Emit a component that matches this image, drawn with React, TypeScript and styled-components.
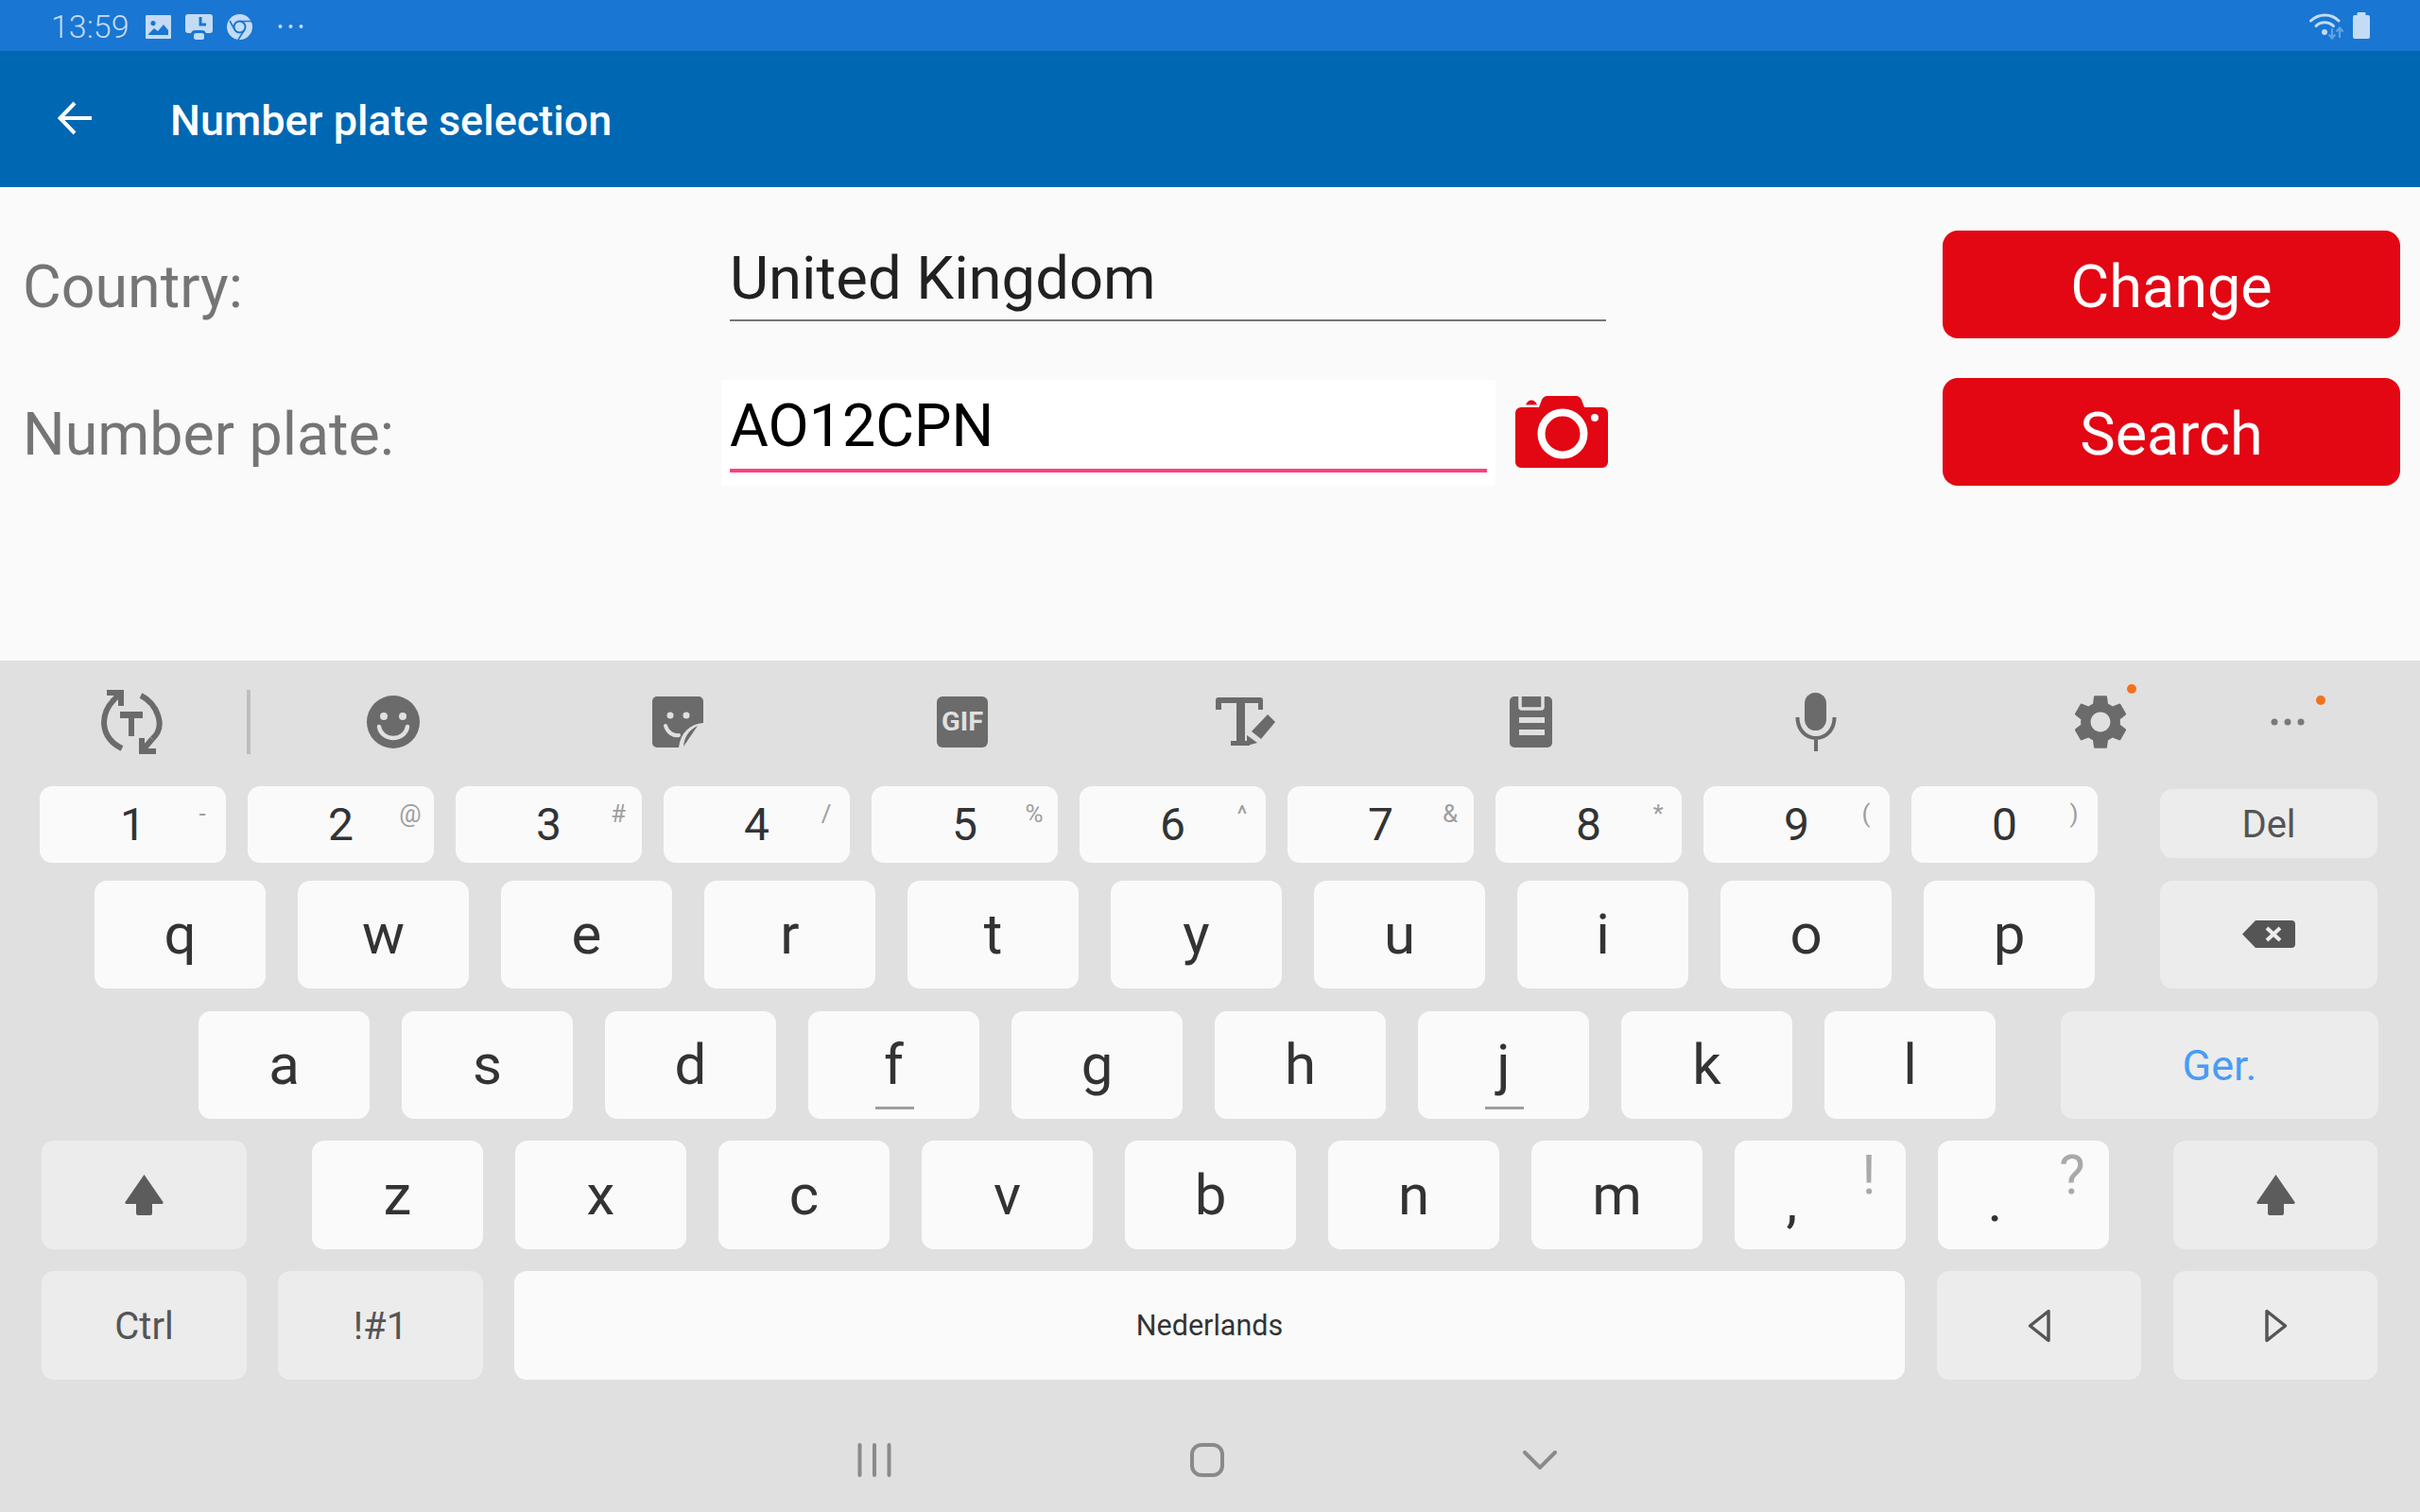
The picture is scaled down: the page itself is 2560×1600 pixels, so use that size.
import React from "react";
import styled, { createGlobalStyle } from "styled-components";

const Global = createGlobalStyle`
  html, body { margin: 0; padding: 0; background: #e0e0e0; }
  body { font-family: Roboto, "Liberation Sans", sans-serif; }
`;

const Screen = styled.div`
  width: 2560px;
  height: 1600px;
  display: flex;
  flex-direction: column;
  overflow: hidden;
`;

const StatusBar = styled.div`
  height: 54px;
  background: #1976d2;
  display: flex;
  align-items: center;
  padding: 2px 53px 0 54px;
  box-sizing: border-box;
  color: #c3dbf5;
`;
const Clock = styled.span`
  font-size: 34px;
  font-weight: 300;
  margin-right: 18px;
  width: 82px;
`;
const StatusIcons = styled.div`
  display: flex;
  align-items: center;
  gap: 15px;
`;
const StatusRight = styled.div`
  margin-left: auto;
  margin-top: -2px;
  display: flex;
  align-items: center;
  gap: 9px;
`;

const AppBar = styled.div`
  height: 144px;
  background: #0067b3;
  display: flex;
  align-items: center;
  padding-left: 61px;
  color: #fff;
`;
const BackIcon = styled.svg`
  width: 36px;
  height: 36px;
  margin-right: 83px;
  margin-top: -2px;
`;
const Title = styled.h1`
  margin: 2px 0 0;
  font-size: 45px;
  font-weight: 500;
  line-height: 1;
`;

const Content = styled.div`
  height: 501px;
  background: #fafafa;
  box-sizing: border-box;
  padding: 46px 21px 0 24px;
  display: grid;
  grid-template-columns: 739px 1292px 484px;
  grid-template-rows: 114px 114px;
  row-gap: 42px;
  align-items: center;
`;
const Label = styled.div`
  font-size: 62.7px;
  color: #757575;
  line-height: 1;
  margin-top: 6px;
`;
const FieldCell = styled.div`
  display: flex;
  align-items: center;
  height: 100%;
`;
const CountryField = styled.div`
  width: 927px;
  margin-left: 9px;
  height: 97px;
  box-sizing: border-box;
  border-bottom: 2px solid #757575;
  font-size: 63.4px;
  line-height: 103px;
  color: #212121;
  margin-top: -19px;
`;
const PlateBox = styled.div`
  width: 819px;
  height: 112px;
  margin-top: 2px;
  box-sizing: border-box;
  background: #fff;
  padding: 0 9px;
`;
const PlateText = styled.div`
  height: 98px;
  box-sizing: border-box;
  border-bottom: 4px solid #ff4081;
  font-size: 62.7px;
  line-height: 98px;
  color: #000;
`;
const CameraIcon = styled.svg`
  width: 98px;
  height: 76px;
  margin-left: 21px;
`;
const ActionButton = styled.div`
  height: 114px;
  border-radius: 16px;
  background: #e30613;
  color: #fff;
  font-size: 63px;
  display: flex;
  align-items: center;
  justify-content: center;
  padding-top: 5px;
  box-sizing: border-box;
`;

const Keyboard = styled.div`
  flex: 1;
  background: #e0e0e0;
  display: flex;
  flex-direction: column;
`;
const Toolbar = styled.div`
  height: 133px;
  box-sizing: border-box;
  padding-bottom: 3px;
  display: flex;
  align-items: center;
  flex: none;
`;
const ToolSlot = styled.div<{ $w: number; $ml?: number }>`
  position: relative;
  flex: none;
  width: ${(p) => p.$w}px;
  margin-left: ${(p) => p.$ml ?? 0}px;
  display: flex;
  justify-content: center;
  align-items: center;
  color: #6b6b6b;
`;
const Separator = styled.div`
  flex: none;
  width: 4px;
  height: 68px;
  margin-left: 22px;
  background: #bdbdbd;
`;
const Notice = styled.span<{ $x: number; $y: number }>`
  position: absolute;
  left: 50%;
  top: 50%;
  width: 10px;
  height: 10px;
  margin-left: ${(p) => p.$x - 5}px;
  margin-top: ${(p) => p.$y - 5}px;
  border-radius: 50%;
  background: #f4711c;
`;

const KeyRow = styled.div<{ $h: number; $pl: number; $gap: number; $mt: number }>`
  flex: none;
  height: ${(p) => p.$h}px;
  margin-top: ${(p) => p.$mt}px;
  padding-left: ${(p) => p.$pl}px;
  display: flex;
  gap: ${(p) => p.$gap}px;
`;
const Key = styled.div<{ $w: number; $fn?: boolean; $ml?: number; $short?: boolean }>`
  position: relative;
  flex: none;
  box-sizing: border-box;
  width: ${(p) => p.$w}px;
  height: ${(p) => (p.$short ? "73px" : "100%")};
  margin-left: ${(p) => p.$ml ?? 0}px;
  margin-top: ${(p) => (p.$short ? "3px" : "0")};
  border-radius: 13px;
  background: ${(p) => (p.$fn ? "#ececec" : "#fafafa")};
  display: flex;
  align-items: center;
  justify-content: center;
  color: #333;
`;
const Digit = styled.span`
  font-size: 48px;
  line-height: 1;
`;
const Letter = styled.span<{ $dx?: number; $dy?: number }>`
  font-size: 60px;
  line-height: 1;
  margin-left: ${(p) => p.$dx ?? 0}px;
  margin-top: ${(p) => p.$dy ?? 0}px;
`;
const SmallHint = styled.span`
  position: absolute;
  left: 172px;
  top: 16px;
  transform: translateX(-50%);
  font-size: 26px;
  line-height: 1;
  color: #9e9e9e;
`;
const BigHint = styled.span`
  position: absolute;
  left: 142px;
  top: 7px;
  transform: translateX(-50%);
  font-size: 58px;
  line-height: 1;
  color: #a9a9a9;
`;
const Underline = styled.span`
  position: absolute;
  left: 50%;
  bottom: 10px;
  width: 41px;
  height: 3px;
  margin-left: -20px;
  background: #9e9e9e;
`;
const FnLabel = styled.span`
  font-size: 40px;
  line-height: 1;
  color: #555;
  margin-top: 2px;
`;
const LangLabel = styled.span`
  font-size: 45px;
  line-height: 1;
  color: #4a9bf5;
`;
const SpaceLabel = styled.span`
  font-size: 30.5px;
  line-height: 1;
  color: #333;
  margin-top: 2px;
`;

const NavBar = styled.div`
  flex: 1;
  display: flex;
  align-items: center;
  justify-content: center;
  padding: 30px 6px 0 0;
  color: #8a8a8a;
`;
const NavSlot = styled.div`
  width: 352px;
  display: flex;
  justify-content: center;
`;

const BG = "#e0e0e0";

const ImageIcon = () => (
  <svg width="27" height="25" viewBox="0 0 27 25">
    <path fill="currentColor" fillRule="evenodd" d="M1 0h25a1 1 0 0 1 1 1v23a1 1 0 0 1-1 1H1a1 1 0 0 1-1-1V1a1 1 0 0 1 1-1zM3 21h21v-5l-5-6-6 7-4-3-6 6zM8 6a2.6 2.6 0 1 0 0.01 0z" />
  </svg>
);
const DownloadIcon = () => (
  <svg width="29" height="27" viewBox="0 0 29 27">
    <path fill="currentColor" d="M3 0h23a3 3 0 0 1 3 3v14a3 3 0 0 1-3 3h-4c-1 -2-2-3-4-3h-8c-2 0-3 1-4 3H3a3 3 0 0 1-3-3V3a3 3 0 0 1 3-3z" />
    <path fill="none" stroke="#1976d2" strokeWidth="3" d="M16 3v8h6" />
    <rect x="9" y="20" width="11" height="7" rx="2.5" fill="currentColor" />
  </svg>
);
const ChromeIcon = () => (
  <svg width="27" height="27" viewBox="0 0 27 27">
    <circle cx="13.5" cy="13.5" r="13.5" fill="currentColor" />
    <circle cx="13.5" cy="13.5" r="6" fill="none" stroke="#1976d2" strokeWidth="2" />
    <path fill="none" stroke="#1976d2" strokeWidth="1.6" d="M13.5 7.5H26M8.3 16.5L3 7M18.7 16.5L12 27" />
  </svg>
);
const DotsIcon = () => (
  <svg width="27" height="6" viewBox="0 0 27 6" style={{ marginLeft: 12 }}>
    <circle cx="2.5" cy="3" r="2" fill="currentColor" />
    <circle cx="13.5" cy="3" r="2" fill="currentColor" />
    <circle cx="24.5" cy="3" r="2" fill="currentColor" />
  </svg>
);
const WifiIcon = () => (
  <svg width="37" height="28" viewBox="0 0 37 28" style={{ marginTop: 2 }}>
    <g fill="none" stroke="currentColor" strokeWidth="3" strokeLinecap="round">
      <path d="M1.5 8C10 0 23 0 31 8" />
      <path d="M7 13.5C12 8.5 20 8.5 25.5 13.5" />
    </g>
    <circle cx="16" cy="20" r="3" fill="currentColor" />
    <g fill="none" stroke="#5fa2e6" strokeWidth="2.2">
      <path d="M24 16v10M20.5 22.5l3.5 4 3.5-4" />
      <path d="M32 26v-10M28.5 19.5l3.5-4 3.5 4" />
    </g>
  </svg>
);
const BatteryIcon = () => (
  <svg width="18" height="28" viewBox="0 0 18 28">
    <path fill="currentColor" d="M5.5 0h7a1 1 0 0 1 1 1v2H16a2 2 0 0 1 2 2v21a2 2 0 0 1-2 2H2a2 2 0 0 1-2-2V5a2 2 0 0 1 2-2h2.500V1a1 1 0 0 1 1-1z" />
  </svg>
);
const Camera = () => (
  <CameraIcon viewBox="0 0 98 76">
    <path fill="#e30613" d="M34 0h30c3 0 5 2 6 4l3 8h19a6 6 0 0 1 6 6v52a6 6 0 0 1-6 6H6a6 6 0 0 1-6-6V18a6 6 0 0 1 6-6h19l3-8c1-2 3-4 6-4z" />
    <path fill="#e30613" d="M11 9.500c1-3 3-5 6-5s5 2 6 5z" />
    <path fill="none" stroke="#fafafa" strokeWidth="1.500" d="M9 10.500H25" />
    <circle cx="50" cy="40" r="22.500" fill="none" stroke="#fff" strokeWidth="8" />
    <circle cx="84" cy="23" r="4" fill="#fff" />
  </CameraIcon>
);

const RotateIcon = () => (
  <svg width="68" height="68" viewBox="0 0 68 68">
    <g fill="none" stroke="#6b6b6b" strokeWidth="6">
      <path d="M15 11C1 26 0 50 24 62" />
      <path d="M44 6C60 14 72 38 56 52" />
      <path d="M8 3H23V17M23 3L14 12" />
      <path d="M45 51V65H60M45 65L56 52" />
    </g>
    <path fill="#6b6b6b" d="M22 23H46V30H37V49H31V30H22z" />
  </svg>
);
const SmileIcon = () => (
  <svg width="56" height="56" viewBox="0 0 56 56">
    <circle cx="28" cy="28" r="28" fill="#6b6b6b" />
    <circle cx="18" cy="22" r="4" fill={BG} />
    <circle cx="38" cy="22" r="4" fill={BG} />
    <path d="M13 33C16 49 40 49 43 33" fill="none" stroke={BG} strokeWidth="4.5" strokeLinecap="round" />
  </svg>
);
const StickerIcon = () => (
  <svg width="54" height="54" viewBox="0 0 54 54">
    <path fill="#6b6b6b" d="M5 0H49a5 5 0 0 1 5 5V28C40 29 30 38 28 54H5a5 5 0 0 1-5-5V5a5 5 0 0 1 5-5z" />
    <path fill="#6b6b6b" d="M33 53C34 43 38 36 48 31z" />
    <circle cx="19" cy="20" r="3.500" fill={BG} />
    <circle cx="36" cy="20" r="3.500" fill={BG} />
    <path d="M14 31C16 38 22 42 28 41" fill="none" stroke={BG} strokeWidth="4" strokeLinecap="round" />
  </svg>
);
const GifIcon = () => (
  <svg width="54" height="54" viewBox="0 0 54 54">
    <rect width="54" height="54" rx="6" fill="#6b6b6b" />
    <text x="27" y="36" textAnchor="middle" fontFamily="Roboto, sans-serif" fontWeight="700" fontSize="27" textLength="44" lengthAdjust="spacingAndGlyphs" fill={BG}>GIF</text>
  </svg>
);
const TextEditIcon = () => (
  <svg width="65" height="52" viewBox="0 0 65 52">
    <path fill="#6b6b6b" d="M3 0H47a3 3 0 0 1 3 3V13H45V6H31V46H36V51H16V46H22V6H6V13H0V3a3 3 0 0 1 3-3z" />
    <path fill="#6b6b6b" d="M55 18L63 26L48 44L38 36zM33 40L44 48L33 51z" />
  </svg>
);
const ClipIcon = () => (
  <svg width="45" height="54" viewBox="0 0 45 54">
    <rect width="45" height="54" rx="5" fill="#6b6b6b" />
    <path d="M11 0V11a2 2 0 0 0 2 2H33a2 2 0 0 0 2-2V0" fill="none" stroke={BG} strokeWidth="3.500" />
    <rect x="10" y="22" width="27" height="6" fill={BG} />
    <rect x="10" y="35" width="27" height="6" fill={BG} />
  </svg>
);
const MicIcon = () => (
  <svg width="44" height="62" viewBox="0 0 44 62">
    <rect x="10" width="23" height="40" rx="11.500" fill="#6b6b6b" />
    <path d="M2.500 26C2.500 39 11 48 22 48S41.500 39 41.500 26M22 48V62" fill="none" stroke="#6b6b6b" strokeWidth="4" />
  </svg>
);
const GearIcon = () => (
  <svg width="56" height="58" viewBox="2.700 2 18.600 20">
    <path fill="#6b6b6b" d="M19.14 12.940c.04-.3.06-.61.06-.94 0-.32-.02-.64-.07-.94l2.030-1.580c.18-.14.23-.41.12-.61l-1.920-3.320c-.12-.22-.37-.29-.59-.22l-2.390.96c-.5-.38-1.030-.7-1.620-.94l-.36-2.540c-.04-.24-.24-.41-.48-.41h-3.840c-.24 0-.43.17-.47.41l-.36 2.540c-.59.24-1.130.57-1.620.94l-2.390-.96c-.22-.08-.47 0-.59.22L2.740 8.870c-.12.21-.08.47.12.61l2.030 1.580c-.05.3-.09.63-.09.94s.02.64.07.94l-2.030 1.580c-.18.14-.23.41-.12.61l1.920 3.320c.12.22.37.29.59.22l2.390-.96c.5.38 1.030.7 1.620.94l.36 2.540c.05.24.24.41.48.41h3.840c.24 0 .44-.17.47-.41l.36-2.540c.59-.24 1.130-.56 1.620-.94l2.390.96c.22.08.47 0 .59-.22l1.920-3.320c.12-.22.07-.47-.12-.61l-2.010-1.580zM12 15.600c-1.980 0-3.600-1.620-3.600-3.600s1.620-3.600 3.600-3.600 3.600 1.620 3.600 3.600-1.620 3.600-3.600 3.600z" />
  </svg>
);
const MoreIcon = () => (
  <svg width="36" height="8" viewBox="0 0 36 8">
    <circle cx="4" cy="4" r="3.500" fill="#7a7a7a" />
    <circle cx="18" cy="4" r="3.500" fill="#7a7a7a" />
    <circle cx="32" cy="4" r="3.500" fill="#7a7a7a" />
  </svg>
);
const BackspaceIcon = () => (
  <svg width="56" height="29" viewBox="0 0 56 29" style={{ marginTop: -2 }}>
    <path fill="#555" d="M14 0H52a4 4 0 0 1 4 4V25a4 4 0 0 1-4 4H14L0 14.500z" />
    <path d="M26 8L40 21M40 8L26 21" stroke="#ececec" strokeWidth="4" />
  </svg>
);
const ShiftIcon = () => (
  <svg width="41" height="43" viewBox="0 0 41 43">
    <path fill="#5c5c5c" d="M20.500 0L40.500 29a1.500 1.500 0 0 1-1 2H29V41a2 2 0 0 1-2 2H14a2 2 0 0 1-2-2V31H1.500a1.500 1.500 0 0 1-1-2z" />
  </svg>
);
const CursorLeft = () => (
  <svg width="24" height="36" viewBox="0 0 24 36">
    <path d="M22 2.500V33.500L2.500 18z" fill="none" stroke="#555" strokeWidth="3.500" strokeLinejoin="round" />
  </svg>
);
const CursorRight = () => (
  <svg width="24" height="36" viewBox="0 0 24 36" style={{ marginLeft: 2 }}>
    <path d="M2 2.500V33.500L21.500 18z" fill="none" stroke="#555" strokeWidth="3.500" strokeLinejoin="round" />
  </svg>
);

const digits: [string, string][] = [
  ["1", "-"], ["2", "@"], ["3", "#"], ["4", "/"], ["5", "%"],
  ["6", "^"], ["7", "&"], ["8", "*"], ["9", "("], ["0", ")"],
];

export default function App() {
  return (
    <Screen>
      <Global />
      <StatusBar>
        <Clock>13:59</Clock>
        <StatusIcons>
          <ImageIcon />
          <DownloadIcon />
          <ChromeIcon />
          <DotsIcon />
        </StatusIcons>
        <StatusRight>
          <WifiIcon />
          <BatteryIcon />
        </StatusRight>
      </StatusBar>
      <AppBar>
        <BackIcon viewBox="0 0 36 36">
          <path d="M36 18H3M18 2L2.500 18L18 34" fill="none" stroke="#fff" strokeWidth="4" />
        </BackIcon>
        <Title>Number plate selection</Title>
      </AppBar>
      <Content>
        <Label>Country:</Label>
        <FieldCell>
          <CountryField>United Kingdom</CountryField>
        </FieldCell>
        <ActionButton>Change</ActionButton>
        <Label>Number plate:</Label>
        <FieldCell>
          <PlateBox>
            <PlateText>AO12CPN</PlateText>
          </PlateBox>
          <Camera />
        </FieldCell>
        <ActionButton>Search</ActionButton>
      </Content>
      <Keyboard>
        <Toolbar>
          <ToolSlot $w={200} $ml={39}><RotateIcon /></ToolSlot>
          <Separator />
          <ToolSlot $w={301}><SmileIcon /></ToolSlot>
          <ToolSlot $w={301}><StickerIcon /></ToolSlot>
          <ToolSlot $w={301}><GifIcon /></ToolSlot>
          <ToolSlot $w={301}><TextEditIcon /></ToolSlot>
          <ToolSlot $w={301}><ClipIcon /></ToolSlot>
          <ToolSlot $w={301}><MicIcon /></ToolSlot>
          <ToolSlot $w={301}>
            <GearIcon />
            <Notice $x={33} $y={-35} />
          </ToolSlot>
          <ToolSlot $w={96}>
            <MoreIcon />
            <Notice $x={35} $y={-23} />
          </ToolSlot>
        </Toolbar>

        <KeyRow $h={81} $pl={42} $gap={23} $mt={0}>
          {digits.map(([d, h]) => (
            <Key $w={197} key={d}>
              <Digit>{d}</Digit>
              <SmallHint>{h}</SmallHint>
            </Key>
          ))}
          <Key $w={230} $fn $short $ml={43}><FnLabel>Del</FnLabel></Key>
        </KeyRow>

        <KeyRow $h={114} $pl={100} $gap={34} $mt={19}>
          {"qwertyuiop".split("").map((c) => (
            <Key $w={181} key={c}><Letter>{c}</Letter></Key>
          ))}
          <Key $w={230} $fn $ml={35}><BackspaceIcon /></Key>
        </KeyRow>

        <KeyRow $h={114} $pl={210} $gap={34} $mt={24}>
          {"asdfghjkl".split("").map((c) => (
            <Key $w={181} key={c}>
              <Letter>{c}</Letter>
              {(c === "f" || c === "j") && <Underline />}
            </Key>
          ))}
          <Key $w={336} $fn $ml={35}><LangLabel>Ger.</LangLabel></Key>
        </KeyRow>

        <KeyRow $h={115} $pl={44} $gap={34} $mt={23}>
          <Key $w={217} $fn><ShiftIcon /></Key>
          <Key $w={181} $ml={35}><Letter>z</Letter></Key>
          {"xcvbnm".split("").map((c) => (
            <Key $w={181} key={c}><Letter>{c}</Letter></Key>
          ))}
          <Key $w={181}>
            <Letter $dx={-60} $dy={14}>,</Letter>
            <BigHint>!</BigHint>
          </Key>
          <Key $w={181}>
            <Letter $dx={-60} $dy={14}>.</Letter>
            <BigHint>?</BigHint>
          </Key>
          <Key $w={216} $fn $ml={34}><ShiftIcon /></Key>
        </KeyRow>

        <KeyRow $h={115} $pl={44} $gap={33} $mt={23}>
          <Key $w={217} $fn><FnLabel>Ctrl</FnLabel></Key>
          <Key $w={217} $fn><FnLabel>!#1</FnLabel></Key>
          <Key $w={1471}><SpaceLabel>Nederlands</SpaceLabel></Key>
          <Key $w={216} $fn $ml={1}><CursorLeft /></Key>
          <Key $w={216} $fn $ml={1}><CursorRight /></Key>
        </KeyRow>

        <NavBar>
          <NavSlot>
            <svg width="36" height="36" viewBox="0 0 36 36">
              <path d="M2.500 2V34M18 2V34M33.500 2V34" stroke="currentColor" strokeWidth="4" strokeLinecap="round" />
            </svg>
          </NavSlot>
          <NavSlot>
            <svg width="36" height="36" viewBox="0 0 36 36">
              <rect x="2" y="2" width="32" height="32" rx="10" fill="none" stroke="currentColor" strokeWidth="4" />
            </svg>
          </NavSlot>
          <NavSlot>
            <svg width="36" height="20" viewBox="0 0 36 20">
              <path d="M2 2L18 18L34 2" fill="none" stroke="currentColor" strokeWidth="4" strokeLinecap="round" />
            </svg>
          </NavSlot>
        </NavBar>
      </Keyboard>
    </Screen>
  );
}
